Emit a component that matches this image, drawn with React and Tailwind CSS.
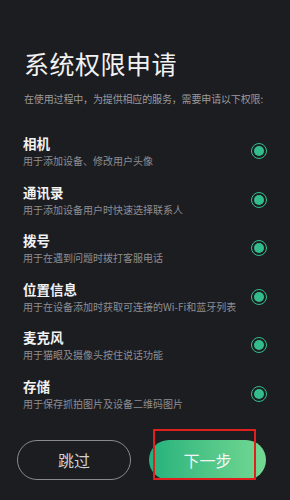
import React from "react";

const items = [
  ["相机", "用于添加设备、修改用户头像"],
  ["通讯录", "用于添加设备用户时快速选择联系人"],
  ["拨号", "用于在遇到问题时拨打客服电话"],
  ["位置信息", "用于在设备添加时获取可连接的Wi-Fi和蓝牙列表"],
  ["麦克风", "用于猫眼及摄像头按住说话功能"],
  ["存储", "用于保存抓拍图片及设备二维码图片"],
];

export default function App() {
  return (
    <div
      className="relative w-[290px] h-[500px] bg-[#1c1d21] overflow-hidden"
      style={{ fontFamily: '"Noto Sans CJK SC", "Noto Sans", sans-serif' }}
    >
      <div className="pl-[24px] pt-[48px]">
        <div className="text-[25px] leading-[30px] text-[#f2f2f2] tracking-[0.5px]">系统权限申请</div>
        <div className="mt-[14px] text-[10px] leading-[14px] text-[#9a9a9e] tracking-[-0.15px]">
          在使用过程中，为提供相应的服务，需要申请以下权限:
        </div>
      </div>
      <div className="mt-[21px] flex flex-col">
        {items.map(([t, s]) => (
          <div key={t} className="h-[48.5px] flex items-center pl-[23px] pr-[23px]">
            <div className="flex-1">
              <div className="text-[13.5px] leading-[19px] font-bold text-[#f2f2f2] mb-[1px]">{t}</div>
              <div className="text-[10px] leading-[14px] text-[#8d8d92]">{s}</div>
            </div>
            <div className="w-[16px] h-[16px] rounded-full border-[1.5px] border-[#33bd8c] flex items-center justify-center">
              <div className="w-[10px] h-[10px] rounded-full bg-[#33bd8c]" />
            </div>
          </div>
        ))}
      </div>
      <div className="absolute left-0 top-[440px] w-full flex pl-[17px] gap-[18px]">
        <div className="w-[114px] h-[40px] rounded-full border-[1.5px] border-[#8a8a8e] flex items-center justify-center text-[16px] text-[#d0d0d0]">
          跳过
        </div>
        <div className="w-[117px] h-[40px] rounded-full bg-gradient-to-r from-[#1fb27c] to-[#72d992] flex items-center justify-center text-[16px] text-[#f5f5f5]">
          下一步
        </div>
      </div>
      <div className="absolute left-[153px] top-[429px] w-[103px] h-[51px] border-2 border-[#e0201c]" />
    </div>
  );
}
